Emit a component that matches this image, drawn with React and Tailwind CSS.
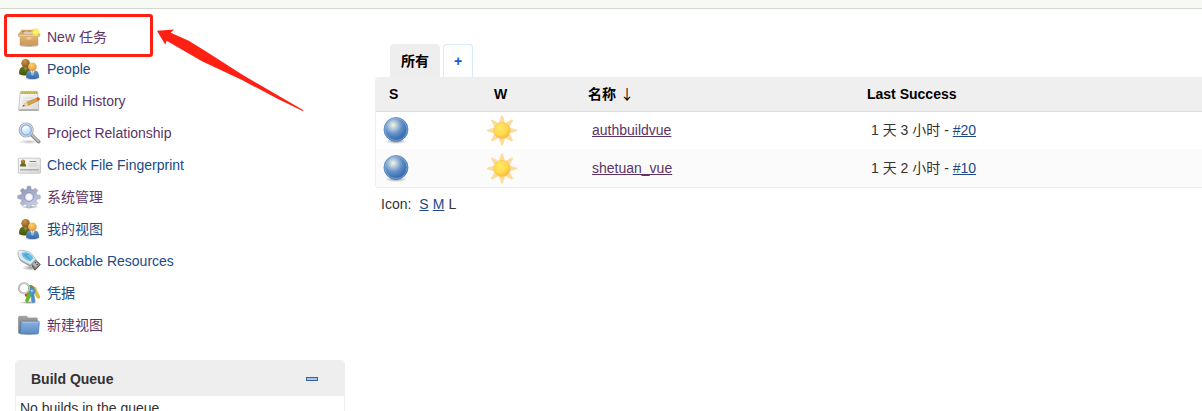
import React from "react";

const IconDefs = () => (
  <svg className="absolute" width="0" height="0" aria-hidden="true">
    <defs>
      <linearGradient id="box" x1="0" y1="0" x2="0" y2="1">
        <stop offset="0" stopColor="#e3bd85" />
        <stop offset="1" stopColor="#c98f4c" />
      </linearGradient>
      <radialGradient id="glow">
        <stop offset="0" stopColor="#fffbd0" />
        <stop offset="0.4" stopColor="#fbe93c" />
        <stop offset="1" stopColor="#fbe93c" stopOpacity="0" />
      </radialGradient>
      <radialGradient id="brownHead" cx="0.4" cy="0.3" r="0.7">
        <stop offset="0" stopColor="#c99348" />
        <stop offset="1" stopColor="#8a5a1c" />
      </radialGradient>
      <radialGradient id="orangeHead" cx="0.4" cy="0.3" r="0.7">
        <stop offset="0" stopColor="#ffd27c" />
        <stop offset="1" stopColor="#e3962f" />
      </radialGradient>
      <linearGradient id="greenBody" x1="0" y1="0" x2="0" y2="1">
        <stop offset="0" stopColor="#66771c" />
        <stop offset="1" stopColor="#46550f" />
      </linearGradient>
      <linearGradient id="blueBody" x1="0" y1="0" x2="0" y2="1">
        <stop offset="0" stopColor="#6398d4" />
        <stop offset="1" stopColor="#3769ab" />
      </linearGradient>
      <linearGradient id="paper" x1="0" y1="0" x2="1" y2="1">
        <stop offset="0" stopColor="#ffffff" />
        <stop offset="1" stopColor="#d9d9d6" />
      </linearGradient>
      <radialGradient id="lens" cx="0.4" cy="0.35" r="0.7">
        <stop offset="0" stopColor="#f4faff" />
        <stop offset="1" stopColor="#a9cbee" />
      </radialGradient>
      <linearGradient id="gear" x1="0" y1="0" x2="0.6" y2="1">
        <stop offset="0" stopColor="#8990b0" />
        <stop offset="0.55" stopColor="#a8afcd" />
        <stop offset="1" stopColor="#ccd2e8" />
      </linearGradient>
      <linearGradient id="folder" x1="0" y1="0" x2="0" y2="1">
        <stop offset="0" stopColor="#8cb1dd" />
        <stop offset="1" stopColor="#5a8dc9" />
      </linearGradient>
      <linearGradient id="folderBack" x1="0" y1="0" x2="0" y2="1">
        <stop offset="0" stopColor="#a2a39f" />
        <stop offset="1" stopColor="#6d706b" />
      </linearGradient>
      <radialGradient id="ball" cx="0.38" cy="0.32" r="0.68">
        <stop offset="0" stopColor="#f6f7dc" />
        <stop offset="0.2" stopColor="#bdd0dd" />
        <stop offset="0.55" stopColor="#5f8fc6" />
        <stop offset="1" stopColor="#2f62ab" />
      </radialGradient>
      <radialGradient id="sun" cx="0.4" cy="0.35" r="0.7">
        <stop offset="0" stopColor="#ffe766" />
        <stop offset="0.6" stopColor="#ffda4b" />
        <stop offset="1" stopColor="#f9b03a" />
      </radialGradient>
      <radialGradient id="shadow">
        <stop offset="0" stopColor="#000" stopOpacity="0.4" />
        <stop offset="1" stopColor="#000" stopOpacity="0" />
      </radialGradient>
    </defs>
  </svg>
);

const Icon = ({ children }) => (
  <svg className="size-6 shrink-0" viewBox="0 0 24 24" aria-hidden="true">
    {children}
  </svg>
);

const BoxIcon = () => (
  <Icon>
    <ellipse cx="12" cy="20.8" rx="11" ry="1.8" fill="url(#shadow)" />
    <path d="M4.5 5.2h14.8l1.3 5.5H3.2z" fill="#a97b43" />
    <path d="M6.3 7.2l3-1.2 3 .8 3.2-.6 2 2.4v1.4H6.3z" fill="#d8cbb3" />
    <path d="M4.6 4.8h14.8l.5 1.4H4z" fill="#d2a365" />
    <path d="M3.2 10h17.6v10.2H3.2z" fill="url(#box)" stroke="#bb8a4c" strokeWidth="0.6" />
    <path d="M4.6 5L1 9.6v1.4h6zM19.4 5l3.8 4.6V11h-6z" fill="#d9ad70" />
    <path d="M1 9.6h22l-.6 1.9H1.6z" fill="#efcf9f" stroke="#c99d63" strokeWidth="0.5" />
    <path d="M9.8 12h4.4v2.6H9.8z" fill="#ecca98" />
    <path d="M4.2 19h15.6" stroke="#dcae72" strokeWidth="0.8" />
    <circle cx="18.7" cy="7" r="4.7" fill="url(#glow)" />
    <circle cx="18.7" cy="7" r="2.6" fill="#fbf165" />
  </Icon>
);

const PeopleIcon = () => (
  <Icon>
    <ellipse cx="15" cy="21.5" rx="7.5" ry="1.8" fill="url(#shadow)" />
    <path d="M2.2 17.2c-.5-4.5 1.2-7.5 4.3-7.8h4c3 .5 4 3 4 8.2-3.4 1.2-9 1.2-12.3-.4z" fill="url(#greenBody)" />
    <path d="M6.5 10l2 4 2-4z" fill="#879750" />
    <circle cx="8.6" cy="6.2" r="4.3" fill="url(#brownHead)" />
    <path d="M9.2 20.8c-.4-4.6 1-7.3 4-7.6h4.4c3.2.4 4.7 3 4.4 7.6-3.4 1.7-9.2 1.7-12.8 0z" fill="url(#blueBody)" />
    <path d="M13.2 13.3l2.3 5.2 2.4-5.2z" fill="#eef3f8" />
    <path d="M14.9 14h1.2l.4 3.2-1 1.4-1-1.4z" fill="#a9bdd3" />
    <circle cx="15.4" cy="9.8" r="4.3" fill="url(#orangeHead)" />
  </Icon>
);

const NotepadIcon = () => (
  <Icon>
    <path d="M3.3 3h17.3l1.2 17.5H1.7z" fill="url(#paper)" stroke="#b4b5b0" strokeWidth="0.7" />
    <path d="M1.8 20.2h20v1.8h-20z" fill="#b0b1ad" />
    <path d="M3.6 3.6h16.8" stroke="#b3a344" strokeWidth="2.4" />
    <path d="M4.2 1.6v3M6.6 1.6v3M9 1.6v3M11.4 1.6v3M13.8 1.6v3M16.2 1.6v3M18.6 1.6v3" stroke="#d9cb5f" strokeWidth="1" />
    <path d="M6 9h10M5.8 11.5h8M5.6 14h5" stroke="#d3d4d1" strokeWidth="0.8" />
    <path d="M5.5 17.2l4.3-4.1 11-4.4 1.2 2.5-10.7 5.2z" fill="#d9a24a" stroke="#a67a35" strokeWidth="0.5" />
    <path d="M5.5 17.2l4.3-4.1 1.5 3.3z" fill="#efd9aa" />
    <path d="M5.5 17.2l1.5-1.4.6 1.2z" fill="#333" />
    <path d="M19.4 9.2l1.6-.7c1.5-.6 2.6 1.8 1.2 2.5l-1.5.8z" fill="#d9502e" />
  </Icon>
);

const SearchIcon = () => (
  <Icon>
    <ellipse cx="12" cy="20.8" rx="11" ry="2.3" fill="url(#shadow)" opacity="0.6" />
    <path d="M15 14.2l6.7 6.5" stroke="#8b8d8a" strokeWidth="3.6" strokeLinecap="round" />
    <path d="M15.2 13.9l6.3 6.2" stroke="#bfc1be" strokeWidth="1.6" strokeLinecap="round" />
    <circle cx="9.2" cy="9" r="7" fill="url(#lens)" stroke="#a6a9a7" strokeWidth="1.2" />
    <circle cx="9.2" cy="9" r="6.1" fill="none" stroke="#e4e8ea" strokeWidth="0.8" />
    <circle cx="9.2" cy="9" r="5.1" fill="none" stroke="#7fadde" strokeWidth="1.2" />
    <path d="M5.5 8.8c.4-3.7 5-4.7 6.9-2.1-2.7-.2-4.7.3-6.9 2.1z" fill="#fff" opacity="0.8" />
  </Icon>
);

const CardIcon = () => (
  <Icon>
    <rect x="1.4" y="5.2" width="22" height="15" rx="0.6" fill="url(#paper)" stroke="#bbbcb9" strokeWidth="0.8" />
    <path d="M3 13.5c-.1-2 .8-3.2 2-3.3h2.2c1.2.1 2 1.3 1.9 3.3z" fill="#5f6e1c" />
    <circle cx="6" cy="8.7" r="2.2" fill="url(#brownHead)" />
    <path d="M12.5 8.5h6.7" stroke="#858783" strokeWidth="1" />
    <path d="M11.2 11h9M11.2 13h9" stroke="#c4c5c2" strokeWidth="0.8" />
    <path d="M3.2 17.6h18.6" stroke="#b5b6b3" strokeWidth="1" strokeDasharray="1 0.8" />
    <path d="M3.2 16.6h18.6" stroke="#8d8f8b" strokeWidth="0.7" />
  </Icon>
);

const GearIcon = () => (
  <Icon>
    <ellipse cx="13" cy="22" rx="9" ry="1.8" fill="url(#shadow)" />
    <path
      d="M9.8 4.2l.6-3h3.2l.6 3 1.8.8 2.5-1.8 2.3 2.3L19 8l.8 1.8 3.4.6v3.2l-3.4.6L19 16l1.8 2.5-2.3 2.3L16 19l-1.8.8-.6 3h-3.2l-.6-3L8 19l-2.5 1.8-2.3-2.3L5 16l-.8-1.8-3.4-.6v-3.2l3.4-.6L5 8 3.2 5.5l2.3-2.3L8 5z"
      fill="url(#gear)"
      stroke="#949ab8"
      strokeWidth="0.6"
      strokeLinejoin="round"
    />
    <circle cx="12" cy="12" r="4.3" fill="none" stroke="#8a90ad" strokeWidth="0.9" />
    <circle cx="12" cy="12" r="3.6" fill="#fafafc" stroke="#d4d8ea" strokeWidth="0.8" />
  </Icon>
);

const UsbIcon = () => (
  <Icon>
    <ellipse cx="14" cy="18.8" rx="9" ry="2.8" fill="url(#shadow)" />
    <path d="M13.5 14.2l4.6-3.8 5.2 5.2-5.4 5.6z" fill="#777a76" stroke="#464946" strokeWidth="0.8" />
    <path d="M15 14.2l3.1-2.7 3.9 4-3.3 3z" fill="#b9bbb8" />
    <path d="M17.7 14l1-.8M19.6 16l1-.8" stroke="#333" strokeWidth="1.1" />
    <path d="M.8 4.4C.6 2 2.3.9 5 1.3c3.8.4 7.2 1 9.7 3.6l4.2 5.4-5.4 5.8L5 11.7C2.3 9.8 1 7.4.8 4.4z" fill="#dde5eb" stroke="#a3afb6" strokeWidth="0.7" />
    <path d="M1.3 7.3c1 2.3 2.6 3.8 4.5 5l7.6 4 5.3-5.8-.2 2-5 5.3-8.6-4.7c-2-1.4-3.2-3.5-3.6-5.8z" fill="#8f9ca4" />
    <path d="M4.8 4.3c2.4-1.6 6-1 8.2.6 1.7 1.3 2.8 2.8 3.3 4.5l-3 2.9c-2-.3-5.4-2-6.9-3.8-1-1.3-1.7-2.6-1.6-4.2z" fill="#63bfe6" />
    <path d="M7 5.4l6.2 5M9 6.4l.5-1.3 1.7.5" fill="none" stroke="#2f8fc0" strokeWidth="0.8" />
    <circle cx="2.9" cy="3.1" r="0.9" fill="#fff" />
  </Icon>
);

const KeysIcon = () => (
  <Icon>
    <ellipse cx="12" cy="21.5" rx="10" ry="1.6" fill="url(#shadow)" />
    <path d="M12.2 9.5L7.6 13.7l.6 1.7 2.5.2 3.7-3.3z" fill="#e43a24" />
    <path d="M15.6 6.3c1.8-1.2 4 .2 3.8 2.6l3.2 5.8.3 2.1-2 .8-4.4-6.2z" fill="#dfbd32" stroke="#c2a12a" strokeWidth="0.4" />
    <path d="M10.8 10.8l3-1 .8 3.8-3.3 6.7-1.8 1.1-1-1.8z" fill="#62bd25" stroke="#4a9c16" strokeWidth="0.4" />
    <path d="M11.2 4.4c2.8-1.4 5.6.2 6.1 2.8L13 9.1z" fill="#e44429" />
    <path d="M11 6.8c1.5-3 5.8-2.3 6.1 1.2l-5 2.6z" fill="#46a74a" />
    <path d="M12.3 8.6c2-2.8 6.4-1.5 6.1 1.8-.1 1.2-.8 2-1.6 2.5l1.3 7.6-1.6 1.6-1.7-1-1-7.8c-1.7-.6-2.4-2.8-1.5-4.7z" fill="#5295d3" stroke="#3f7fbe" strokeWidth="0.5" />
    <path d="M15.5 12.7l1.1 7.6" stroke="#3a79b8" strokeWidth="0.7" />
    <circle cx="7.1" cy="7.3" r="5.2" fill="none" stroke="#9a9c99" strokeWidth="1.8" />
    <circle cx="7.1" cy="7.3" r="5.2" fill="none" stroke="#ebeceb" strokeWidth="0.8" />
    <circle cx="14.9" cy="9.8" r="0.8" fill="#fff" />
  </Icon>
);

const FolderIcon = () => (
  <Icon>
    <ellipse cx="12" cy="21.2" rx="10" ry="1.2" fill="url(#shadow)" />
    <path d="M1.5 20.2V4.5c0-.8.4-1.2 1.2-1.2h6.6c.8 0 1.2.5 1.3 1.6h8.7c.8 0 1.1.4 1.1 1.2v14.1z" fill="url(#folderBack)" stroke="#858884" strokeWidth="0.6" />
    <path d="M3.3 20.8l.7-11.6c0-.6.5-1 1.1-1h16.2c.7 0 1 .4 1 1l-.8 10.6c0 .6-.4 1-1 1z" fill="url(#folder)" stroke="#4577b3" strokeWidth="0.7" />
    <path d="M4.9 9.2h16.3" stroke="#bad1ed" strokeWidth="0.7" />
  </Icon>
);

const BallIcon = () => (
  <svg className="size-8" viewBox="0 0 32 32" role="img" aria-label="Success">
    <ellipse cx="13" cy="27.4" rx="11" ry="2.6" fill="url(#shadow)" />
    <circle cx="13" cy="15.5" r="12" fill="url(#ball)" stroke="#5a86bb" strokeWidth="0.8" />
    <circle cx="13" cy="15.5" r="11" fill="none" stroke="#8eb2dc" strokeWidth="1" opacity="0.75" />
  </svg>
);

const SunIcon = () => (
  <svg className="size-8" viewBox="0 0 32 32" role="img" aria-label="100%">
    {[0, 45, 90, 135, 180, 225, 270, 315].map((angle) => (
      <path
        key={angle}
        d="M12.4 8.6L14.4 1.8h1.2l2 6.8z"
        transform={`rotate(${angle} 15 16.5)`}
        fill="#fddc9a"
        stroke="#fbd58b"
        strokeWidth="0.4"
      />
    ))}
    <circle cx="15" cy="16.5" r="8.1" fill="url(#sun)" stroke="#f9c45c" strokeWidth="0.8" />
  </svg>
);

const tasks = [
  { label: "New 任务", icon: BoxIcon, visited: true, marked: true },
  { label: "People", icon: PeopleIcon },
  { label: "Build History", icon: NotepadIcon, visited: true },
  { label: "Project Relationship", icon: SearchIcon, visited: true },
  { label: "Check File Fingerprint", icon: CardIcon },
  { label: "系统管理", icon: GearIcon, visited: true },
  { label: "我的视图", icon: PeopleIcon },
  { label: "Lockable Resources", icon: UsbIcon },
  { label: "凭据", icon: KeysIcon },
  { label: "新建视图", icon: FolderIcon, visited: true },
];

const jobs = [
  { name: "authbuildvue", last: "1 天 3 小时", build: "#20" },
  { name: "shetuan_vue", last: "1 天 2 小时", build: "#10" },
];

// red frame and arrow laid over the first task
const Marker = () => (
  <>
    <span className="pointer-events-none absolute -left-[13px] -top-[7px] h-[43px] w-[149px] rounded-[3px] border-3 border-[#ff2014]" />
    <svg className="pointer-events-none absolute left-[139px] top-2 h-[82px] w-[148px]" viewBox="0 0 148 82" aria-hidden="true">
      <path d="M1 1.7L18 .6l-3.3 3.1 18 8 16.6 10.4L86 45.5l61.5 35.8-.8.6L122 70 86 51 46 32.3 10.6 11.8 9.3 15.8z" fill="#ff2014" />
    </svg>
  </>
);

const SidePanel = () => (
  <aside className="w-[330px] shrink-0">
    <ul className="pl-0.5">
      {tasks.map(({ label, icon: TaskIcon, visited, marked }) => (
        <li key={label} className="relative h-8">
          <a
            href="#"
            className={`inline-flex h-8 items-center gap-1.5 ${visited ? "text-[#5c3566]" : "text-[#204a87]"}`}
          >
            <TaskIcon />
            {label}
          </a>
          {marked && <Marker />}
        </li>
      ))}
    </ul>

    <section className="mt-[19px] rounded-t border border-[#eee]">
      <div className="flex h-[35px] items-center justify-between rounded-t bg-[#eee] pl-[15px] pr-[26px]">
        <h2 className="font-bold">Build Queue</h2>
        <button type="button" aria-label="Collapse build queue">
          <svg className="h-1 w-3" viewBox="0 0 12 4" aria-hidden="true">
            <rect x="0.5" y="0.5" width="11" height="3" fill="#a9c4e6" stroke="#3465a4" />
          </svg>
        </button>
      </div>
      <p className="px-1 py-0.5">No builds in the queue.</p>
    </section>
  </aside>
);

const MainPanel = () => (
  <main className="min-w-0 flex-1 pt-[23px]">
    <nav className="flex gap-[3px] pl-[15px] font-bold">
      <a href="#" className="flex h-[33px] w-[50px] items-center justify-center rounded-t bg-[#eee] text-black">
        所有
      </a>
      <a href="#" className="flex h-[33px] w-[30px] items-center justify-center rounded-t border border-b-0 border-[#d5ecfc] text-[#0b5cd5]">
        +
      </a>
    </nav>

    <div className="overflow-hidden rounded-l border border-r-0 border-[#eee]">
      <table className="w-full table-fixed text-left">
        <thead className="border-b border-[#ddd] bg-[#efefef] text-black">
          <tr className="h-[33px]">
            <th className="w-[105px] px-[13px]">S</th>
            <th className="w-[94px] px-[13px]">W</th>
            <th className="w-[279px] px-[13px]">
              名称 <span className="font-['Noto_Sans_CJK_SC',sans-serif] font-normal leading-4">↓</span>
            </th>
            <th className="px-[13px]">Last Success</th>
          </tr>
        </thead>
        <tbody>
          {jobs.map((job) => (
            <tr key={job.name} className="h-[38px] even:bg-[#fbfbfb]">
              <td className="pl-[7px]">
                <BallIcon />
              </td>
              <td className="pl-1.5">
                <SunIcon />
              </td>
              <td className="pl-[17px]">
                <a href="#" className="text-[#5c3566] underline">{job.name}</a>
              </td>
              <td className="pl-[17px]">
                {job.last} - <a href="#" className="text-[#204a87] underline">{job.build}</a>
              </td>
            </tr>
          ))}
        </tbody>
      </table>
    </div>

    <p className="flex gap-1 pl-1.5 pt-1.5">
      <span className="mr-1">Icon:</span>
      <a href="#" className="text-[#204a87] underline">S</a>
      <a href="#" className="text-[#204a87] underline">M</a>
      <span>L</span>
    </p>
  </main>
);

const App = () => {
  return (
    <div className="h-screen overflow-hidden bg-white font-['Liberation_Sans','Noto_Sans_CJK_SC',sans-serif] text-sm text-[#333]">
      <IconDefs />
      <header className="h-[9px] border-b border-[#d3d7cf] bg-[#f6faf2]" />
      <div className="flex gap-[30px] pl-[15px] pt-3">
        <SidePanel />
        <MainPanel />
      </div>
    </div>
  );
};

export default App;
